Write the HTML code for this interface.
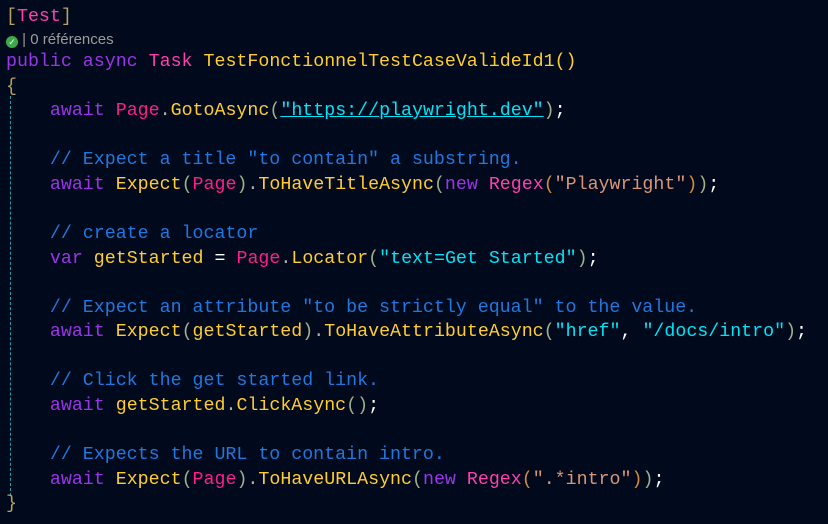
<!DOCTYPE html><html><head><meta charset="utf-8"><style>
body{margin:0;width:828px;height:524px;background:#010a1c;overflow:hidden;position:relative;font-family:"Liberation Mono",monospace;font-size:18.3px;color:#e0e0e0}
.l{position:absolute;left:6px;white-space:pre}
.code{position:absolute;left:6px;top:50px;line-height:24.56px;white-space:pre}
.k{color:#9b34e8}.t{color:#ff3fae}.p{color:#ff1d8c}.y{color:#ffcc30}.c{color:#1f78e0}.s{color:#00e4f8}.b{color:#d8957a}
.g{color:#9db08a}.o{color:#d5893a}.d{color:#b0b0b0}.w{color:#fff}
.u{text-decoration:underline}
.guide{position:absolute;left:10px;top:96px;height:400px;border-left:1px dashed #1fa0a8}
</style></head><body>
<div class="l" style="top:5px;line-height:24px"><span style="color:#b8a060">[</span><span class="t">Test</span><span style="color:#b8a060">]</span></div>
<div class="l" style="top:31px;font-family:'Liberation Sans',sans-serif;font-size:15px;color:#9a9a9a"><span style="display:inline-block;width:12px;height:12px;border-radius:50%;background:#3caa4a;vertical-align:-1px;color:#fff;font-size:9px;text-align:center;line-height:12px">✓</span> | 0 références</div>
<div class="guide"></div>
<div class="code"><span class="k">public async</span> <span class="t">Task</span> <span class="y">TestFonctionnelTestCaseValideId1</span><span class="y">()</span>
<span style="color:#b8a060">{</span>
    <span class="k">await</span> <span class="p">Page</span><span class="d">.</span><span class="y">GotoAsync</span><span class="g">(</span><span class="s u">"https://playwright.dev"</span><span class="g">)</span><span class="w">;</span>

    <span class="c">// Expect a title "to contain" a substring.</span>
    <span class="k">await</span> <span class="y">Expect</span><span class="g">(</span><span class="p">Page</span><span class="g">)</span><span class="d">.</span><span class="y">ToHaveTitleAsync</span><span class="g">(</span><span class="k">new</span> <span class="t">Regex</span><span class="o">(</span><span class="b">"Playwright"</span><span class="o">)</span><span class="g">)</span><span class="w">;</span>

    <span class="c">// create a locator</span>
    <span class="k">var</span> <span class="y">getStarted</span> <span class="w">=</span> <span class="p">Page</span><span class="d">.</span><span class="y">Locator</span><span class="g">(</span><span class="s">"text=Get Started"</span><span class="g">)</span><span class="w">;</span>

    <span class="c">// Expect an attribute "to be strictly equal" to the value.</span>
    <span class="k">await</span> <span class="y">Expect</span><span class="g">(</span><span class="y">getStarted</span><span class="g">)</span><span class="d">.</span><span class="y">ToHaveAttributeAsync</span><span class="g">(</span><span class="s">"href"</span><span class="w">,</span> <span class="s">"/docs/intro"</span><span class="g">)</span><span class="w">;</span>

    <span class="c">// Click the get started link.</span>
    <span class="k">await</span> <span class="y">getStarted</span><span class="d">.</span><span class="y">ClickAsync</span><span class="g">()</span><span class="w">;</span>

    <span class="c">// Expects the URL to contain intro.</span>
    <span class="k">await</span> <span class="y">Expect</span><span class="g">(</span><span class="p">Page</span><span class="g">)</span><span class="d">.</span><span class="y">ToHaveURLAsync</span><span class="g">(</span><span class="k">new</span> <span class="t">Regex</span><span class="o">(</span><span class="b">".*intro"</span><span class="o">)</span><span class="g">)</span><span class="w">;</span>
<span style="color:#b8a060">}</span></div>
</body></html>
